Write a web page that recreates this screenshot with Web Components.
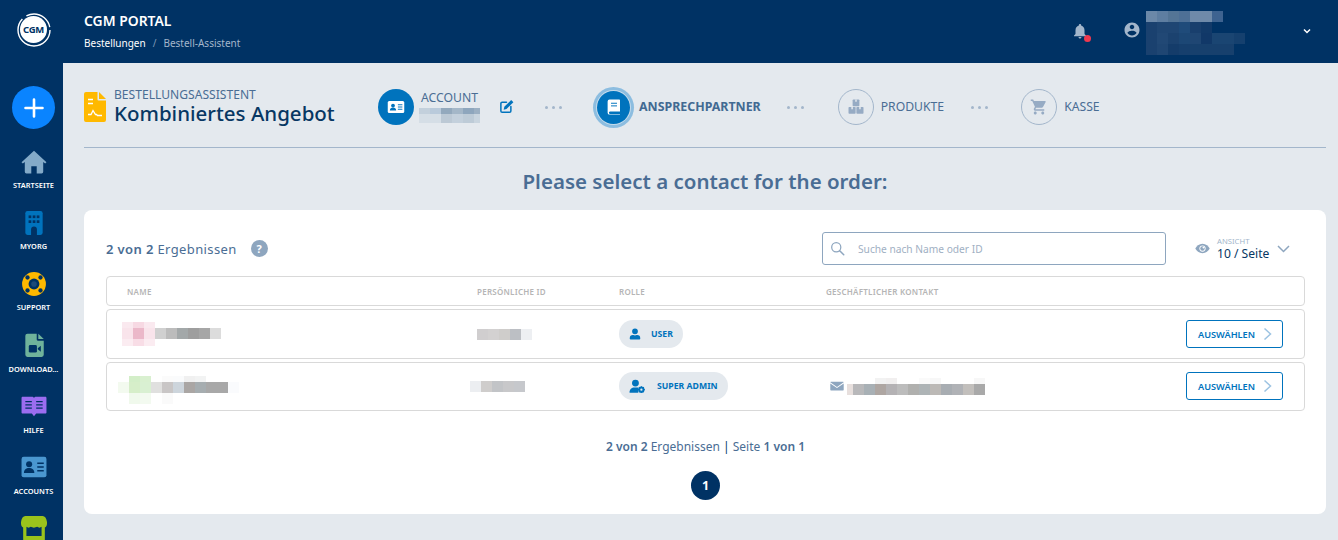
<!doctype html>
<html lang="de">
<head>
<meta charset="utf-8">
<title>CGM Portal</title>
<style>
  html, body { margin: 0; height: 100%; overflow: hidden; }
  body { display: flex; background: #e4e9ee; font-family: "Noto Sans", "Open Sans", sans-serif; color: #4a6d94; }
  cgm-main { flex: 1; min-width: 0; }
</style>
</head>
<body>
<cgm-sidebar>
  <nav-item icon="home" label="STARTSEITE"></nav-item>
  <nav-item icon="building" label="MYORG"></nav-item>
  <nav-item icon="ring" label="SUPPORT"></nav-item>
  <nav-item icon="filevideo" label="DOWNLOAD..."></nav-item>
  <nav-item icon="book" label="HILFE"></nav-item>
  <nav-item icon="card" label="ACCOUNTS"></nav-item>
  <nav-item icon="store"></nav-item>
</cgm-sidebar>
<cgm-main>
  <cgm-topbar></cgm-topbar>
  <order-header>
    <order-step slot="steps" icon="cardwhite" state="done" label="ACCOUNT"></order-step>
    <order-step slot="steps" icon="bookwhite" state="active" label="ANSPRECHPARTNER"></order-step>
    <order-step slot="steps" icon="boxes" label="PRODUKTE"></order-step>
    <order-step slot="steps" icon="cart" label="KASSE"></order-step>
  </order-header>
  <contact-panel></contact-panel>
</cgm-main>

<script>
const ICONS = {
  home: '<path fill="#83aac8" d="M12 1.500 .5 12.200l1.200 1.200 1.800-1.500V21A1.500 1.500 0 0 0 5 22.500h4.500V16h5v6.500H19a1.500 1.500 0 0 0 1.500-1.500v-9.100l1.800 1.500 1.200-1.200z"/>',
  building: '<rect x="4" y="1" width="16" height="22" rx="2" fill="#0073bd"/><g fill="#003264"><rect x="7" y="5" width="2.500" height="2.500"/><rect x="10.800" y="5" width="2.500" height="2.500"/><rect x="14.500" y="5" width="2.500" height="2.500"/><rect x="7" y="9.500" width="2.500" height="2.500"/><rect x="10.800" y="9.500" width="2.500" height="2.500"/><rect x="14.500" y="9.500" width="2.500" height="2.500"/><path d="M9.300 23v-5a2.700 2.700 0 0 1 5.400 0v5z"/></g>',
  ring: '<circle cx="12" cy="12" r="11" fill="#ffb900"/><circle cx="12" cy="12" r="5" fill="#003264"/><circle cx="12" cy="12" r="2.600" fill="#1d4a78"/><g fill="#003264"><circle cx="6" cy="6" r="2"/><circle cx="18" cy="6" r="2"/><circle cx="6" cy="18" r="2"/><circle cx="18" cy="18" r="2"/></g>',
  filevideo: '<path fill="#6fb39b" d="M6 1.500h8.500v5.500a1 1 0 0 0 1 1h5.500v13a2 2 0 0 1-2 2H6a2 2 0 0 1-2-2V3.500a2 2 0 0 1 2-2z"/><path fill="#6fb39b" d="M16 1.500l5 5h-5z"/><rect x="7.200" y="12" width="7.500" height="7" rx="1.300" fill="#003264"/><path fill="#003264" d="m15.500 15 2.800-2.200v5.400L15.500 16z"/>',
  book: '<path fill="#9b6df0" d="M1.500 3.500h8.500c1 0 1.700.4 2 1 .3-.6 1-1 2-1h8.500c.5 0 1 .4 1 1v13.500c0 .5-.5 1-1 1H14l-2 2.500-2-2.500H1.500c-.5 0-1-.5-1-1V4.500c0-.6.5-1 1-1z"/><g stroke="#003264" stroke-width="1.200"><path d="M4 8h6M4 11h6M4 14h6M14 8h6M14 11h6M14 14h6"/></g>',
  card: '<rect x=".5" y="2.500" width="23" height="19" rx="2" fill="#4a97d0"/><circle cx="7.500" cy="9.500" r="2.800" fill="#003264"/><path fill="#003264" d="M2.700 17.500c0-3 2-4.500 4.800-4.500s4.800 1.500 4.800 4.500z"/><g stroke="#003264" stroke-width="1.300"><path d="M15 8.500h6M15 12h6M15 15.500h6"/></g>',
  store: '<path fill="#9ac31c" d="M4 0h16c2 0 3.500 2 4 5.500V7c0 1.800-1 3.500-2 3.500V22a2 2 0 0 1-2 2H4a2 2 0 0 1-2-2V10.500C1 10.500 0 8.800 0 7V5.500C.5 2 2 0 4 0z"/><path fill="#003264" d="M5 10c1.200 1 2.800 1 4 0 1.800 1 3.800 1 6 0 1.200 1 2.800 1 4 0v8.500H5z"/>',
  cardwhite: '<rect x="1" y="4" width="22" height="16" rx="2" fill="#fff"/><circle cx="8" cy="10" r="2.500" fill="#0073bd"/><path fill="#0073bd" d="M3.800 16.500c0-2.600 1.800-3.900 4.200-3.900s4.200 1.300 4.200 3.900z"/><g stroke="#0073bd" stroke-width="1.300"><path d="M14.500 9h6M14.500 12h6M14.500 15h6"/></g>',
  bookwhite: '<path fill="#fff" d="M6 2h13a1 1 0 0 1 1 1v15H6.500a1.700 1.700 0 0 0 0 3.300H20v.7H6a2.500 2.500 0 0 1-2.500-2.500v-15A2.500 2.500 0 0 1 6 2z"/><g stroke="#0073bd" stroke-width="1.300"><path d="M8 7h8M8 10.500h8"/></g>',
  boxes: '<g fill="#96abc4"><rect x="7.500" y="2" width="9" height="9" rx="1"/><rect x="2" y="12" width="9.500" height="9" rx="1"/><rect x="12.500" y="12" width="9.500" height="9" rx="1"/></g><g fill="#e4e9ee"><rect x="11" y="2" width="2" height="3"/><rect x="5.800" y="12" width="2" height="3"/><rect x="16.300" y="12" width="2" height="3"/></g>',
  cart: '<path fill="#96abc4" d="M7 18c-1.100 0-1.990.9-1.990 2S5.900 22 7 22s2-.9 2-2-.9-2-2-2zM1 2v2h2l3.600 7.590-1.350 2.450c-.16.280-.25.610-.25.960 0 1.100.9 2 2 2h12v-2H7.420c-.14 0-.25-.11-.25-.25l.03-.12.9-1.630h7.450c.75 0 1.410-.41 1.750-1.030l3.580-6.490c.08-.14.12-.31.12-.48 0-.55-.45-1-1-1H5.210l-.94-2H1zm16 16c-1.100 0-1.990.9-1.990 2s.89 2 1.990 2 2-.9 2-2-.9-2-2-2z"/>',
  edit: '<path fill="none" stroke="#0073bd" stroke-width="2.400" stroke-linecap="round" stroke-linejoin="round" d="M12 5H5a2 2 0 0 0-2 2v12a2 2 0 0 0 2 2h12a2 2 0 0 0 2-2v-7"/><path fill="#0073bd" d="M19.500 1.500 23 5 12 16l-4.500 1 1-4.500z"/>',
  doc: '<path fill="#ffb900" d="M2 0h11.500v7.500a1 1 0 0 0 1 1H22V28a2 2 0 0 1-2 2H2a2 2 0 0 1-2-2V2a2 2 0 0 1 2-2z"/><path fill="#ffb900" d="M15 0l7 7h-7z"/><g stroke="#fff" stroke-width="1.300" fill="none"><path d="M4 7.500h5M4 11.500h5M4 22.500h3l2-4 2.500 4h1l1 1H18"/></g>',
  bell: '<path fill="#a3b6cb" d="M12 22c1.100 0 2-.9 2-2h-4c0 1.100.89 2 2 2zm6-6v-5c0-3.070-1.640-5.640-4.500-6.320V4c0-.83-.67-1.500-1.500-1.500s-1.500.67-1.500 1.500v.68C7.630 5.360 6 7.920 6 11v5l-2 2v1h16v-1l-2-2z"/>',
  account: '<path fill="#a3b6cb" d="M12 2C6.480 2 2 6.480 2 12s4.480 10 10 10 10-4.480 10-10S17.520 2 12 2zm0 3c1.660 0 3 1.340 3 3s-1.340 3-3 3-3-1.340-3-3 1.340-3 3-3zm0 14.200c-2.500 0-4.710-1.280-6-3.220.03-1.990 4-3.080 6-3.080 1.990 0 5.970 1.090 6 3.080-1.290 1.940-3.500 3.220-6 3.220z"/>',
  search: '<circle cx="10" cy="10" r="7.300" fill="none" stroke="#8ea6bf" stroke-width="2"/><path stroke="#8ea6bf" stroke-width="2.400" stroke-linecap="round" d="m15.500 15.500 6.500 6.500"/>',
  eye: '<path fill="#8ea6bf" d="M12 4.500C6.500 4.500 2.500 8 .5 12c2 4 6 7.500 11.500 7.500S21.500 16 23.500 12C21.500 8 17.500 4.500 12 4.500z"/><circle cx="12" cy="12" r="5" fill="#fff"/><circle cx="12" cy="12" r="3.600" fill="#8ea6bf"/><circle cx="13.500" cy="10.500" r="1.500" fill="#fff"/>',
  user: '<path fill="#0073bd" d="M12 12.500a5.800 5.800 0 1 0 0-11.600 5.800 5.800 0 0 0 0 11.600zm4.200 1.500h-.8a8.300 8.300 0 0 1-6.800 0h-.8A6.300 6.300 0 0 0 1.500 20.300v1.100c0 1 .8 1.700 1.700 1.700h17.600c1 0 1.700-.8 1.700-1.700v-1.100a6.300 6.300 0 0 0-6.300-6.300z"/>',
  useradmin: '<circle cx="9.500" cy="6.500" r="5.500" fill="#0073bd"/><path fill="#0073bd" d="M0 21.500c0-5 3.500-8 8-8h3.500c1 0 2 .2 3 .7l-.5 7.800H1.500a1.500 1.500 0 0 1-1.500-.5z"/><circle cx="19" cy="17" r="3.700" fill="none" stroke="#0073bd" stroke-width="2.600"/><g stroke="#0073bd" stroke-width="1.700"><path d="M19 11.500v11M13.500 17h11M15 13l8 8M23 13l-8 8"/></g><circle cx="19" cy="17" r="1.800" fill="#e4e9ee"/>',
  mail: '<path fill="#8ea6bf" d="M1.500 4.500h21c.5 0 1 .4 1 1L12 13.500.5 5.500c0-.6.5-1 1-1zM.5 7.500 12 15.500l11.500-8v11c0 .6-.5 1-1 1h-21c-.5 0-1-.4-1-1z"/>'
}

class AppIcon extends HTMLElement {
  connectedCallback() {
    const w = this.getAttribute('w') || 24
    const h = this.getAttribute('h') || w
    const vb = this.getAttribute('vb') || '0 0 24 24'
    this.attachShadow({ mode: 'open' }).innerHTML = `
      <style>:host { display: block; width: ${w}px; height: ${h}px; flex: none; } svg { display: block; }</style>
      <svg xmlns="http://www.w3.org/2000/svg" width="${w}" height="${h}" viewBox="${vb}">${ICONS[this.getAttribute('name')]}</svg>`
  }
}
customElements.define('app-icon', AppIcon)

// pixelated area: rows split by "|", cells by space, "-" is an empty cell
class BlurBlock extends HTMLElement {
  connectedCallback() {
    const rows = this.getAttribute('cells').split('|').map(r => r.trim().split(/\s+/))
    const n = Math.max(...rows.map(r => r.length))
    const cols = this.getAttribute('cols') || `repeat(${n}, 11px)`
    const heights = this.getAttribute('heights') || rows.map(() => '11px').join(' ')
    const cells = rows.map(r => r.concat(Array(n - r.length).fill('-'))
      .map(c => `<i style="background:${c === '-' ? 'transparent' : '#' + c}"></i>`).join('')).join('')
    this.attachShadow({ mode: 'open' }).innerHTML = `
      <style>
        :host { display: block; flex: none; }
        div { display: grid; grid-template-columns: ${cols}; grid-template-rows: ${heights}; }
      </style>
      <div>${cells}</div>`
  }
}
customElements.define('blur-block', BlurBlock)

class NavItem extends HTMLElement {
  connectedCallback() {
    const label = this.getAttribute('label')
    this.attachShadow({ mode: 'open' }).innerHTML = `
      <style>
        :host { display: flex; flex-direction: column; align-items: center; height: 61.200px; flex: none; }
        .ic { height: 31px; display: flex; align-items: center; justify-content: center; }
        span { font-size: 7.400px; font-weight: 600; color: #fff; line-height: 10px; margin-top: 3px; white-space: nowrap; }
      </style>
      <div class="ic"><app-icon name="${this.getAttribute('icon')}" w="26"></app-icon></div>
      ${label ? `<span>${label}</span>` : ''}`
  }
}
customElements.define('nav-item', NavItem)

class CgmSidebar extends HTMLElement {
  constructor() {
    super()
    this.attachShadow({ mode: 'open' }).innerHTML = `
      <style>
        :host { display: flex; flex-direction: column; align-items: center; width: 63px; height: 100vh; flex: none; box-sizing: border-box; padding-left: 4px; background: #003264; overflow: hidden; }
        .logo { margin-top: 13px; width: 34px; height: 34px; flex: none; }
        .add { margin-top: 39px; width: 43px; height: 43px; flex: none; border-radius: 50%; background: #0a84ff; display: flex; align-items: center; justify-content: center; }
        .list { margin-top: 17px; display: flex; flex-direction: column; width: 100%; }
      </style>
      <svg class="logo" viewBox="0 0 34 34">
        <circle cx="17" cy="17" r="16" fill="none" stroke="#fff" stroke-width="1.400" stroke-dasharray="62 5 30 4"/>
        <circle cx="16.500" cy="16.500" r="13.500" fill="#fff"/>
        <text x="16.500" y="20" text-anchor="middle" font-family="Noto Sans, sans-serif" font-size="9.500" font-weight="700" fill="#003264" letter-spacing="-.2">CGM</text>
      </svg>
      <div class="add">
        <svg width="20" height="20" viewBox="0 0 20 20"><path d="M10 1.500v17M1.500 10h17" stroke="#fff" stroke-width="2.600" stroke-linecap="round"/></svg>
      </div>
      <div class="list"><slot></slot></div>`
  }
}
customElements.define('cgm-sidebar', CgmSidebar)

class CgmMain extends HTMLElement {
  constructor() {
    super()
    this.attachShadow({ mode: 'open' }).innerHTML = `
      <style>:host { display: block; height: 100vh; overflow: hidden; }</style>
      <slot></slot>`
  }
}
customElements.define('cgm-main', CgmMain)

class CgmTopbar extends HTMLElement {
  constructor() {
    super()
    this.attachShadow({ mode: 'open' }).innerHTML = `
      <style>
        :host { display: flex; height: 63px; background: #003264; padding: 0 27px 0 21px; align-items: flex-start; box-sizing: border-box; }
        .brand { flex: 1; padding-top: 12px; }
        h1 { margin: 0; font-size: 13.900px; line-height: 18px; font-weight: 600; color: #fff; }
        .crumbs { margin-top: 6px; font-size: 10px; line-height: 14px; color: #fff; display: flex; }
        .crumbs i { font-style: normal; color: #7f98b4; margin: 0 7px 0 7px; }
        .crumbs span { color: #a3b6cb; }
        .bell { position: relative; margin-top: 22px; }
        .dot { position: absolute; right: -2px; bottom: -2px; width: 7px; height: 7px; border-radius: 50%; background: #f0394f; }
        .acct { margin: 21px 0 0 34px; }
        .name { margin: 11px 0 0 5px; }
        .chev { margin: 28px 0 0 47px; }
      </style>
      <div class="brand">
        <h1>CGM PORTAL</h1>
        <div class="crumbs">Bestellungen<i>/</i><span>Bestell-Assistent</span></div>
      </div>
      <div class="bell"><app-icon name="bell" w="18"></app-icon><div class="dot"></div></div>
      <app-icon class="acct" name="account" w="18"></app-icon>
      <blur-block class="name" cols="repeat(10, 11px)" heights="11px 11px 11px 11px"
        cells="6b88a8 5e7ea1 547596 4e7096 6f8aa9 6f8aa9 3e6390 - - - |
               1a416f 1f4673 1f4673 1f4b7a 193f6d 123a69 - - - - |
               1a416f 214875 1b426f 1c4775 1f4673 113868 1a4572 1a4572 15406e - |
               1a416f 1f4673 143c6a 163f6d 17406d 17406d 17406d 17406d - -"></blur-block>
      <svg class="chev" width="8" height="6" viewBox="0 0 8 6"><path d="m1 1.500 3 3 3-3" fill="none" stroke="#fff" stroke-width="1.500"/></svg>`
  }
}
customElements.define('cgm-topbar', CgmTopbar)

class OrderStep extends HTMLElement {
  connectedCallback() {
    const state = this.getAttribute('state') || 'todo'
    const on = state !== 'todo'
    const label = this.getAttribute('label')
    const sub = label === 'ACCOUNT'
    this.attachShadow({ mode: 'open' }).innerHTML = `
      <style>
        :host { display: flex; align-items: center; flex: none; }
        .circle { width: 36px; height: 36px; box-sizing: border-box; border-radius: 50%; display: flex; align-items: center; justify-content: center; flex: none;
          ${on ? 'background:#0073bd;' : 'border:1px solid #a3b6cb;'}
          ${state === 'active' ? 'box-shadow: 0 0 0 1px #c5dbeb, 0 0 0 4px #8cbde0; width:33px; height:33px; margin-left:4px;' : ''} }
        .txt { margin-left: 7px; ${state === 'active' ? 'margin-left:9px;' : ''} }
        .lbl { display: block; font-size: 12.200px; line-height: 16px; color: #4a6d94; white-space: nowrap; ${state === 'active' ? 'font-weight: 700; color:#426a92; font-size:12.400px;' : ''} ${sub ? 'margin-top:-1px;' : ''} }
        .sub { margin: 2px 0 0 -2px; }
      </style>
      <div class="circle"><app-icon name="${this.getAttribute('icon')}" w="18"></app-icon></div>
      <div class="txt">
        <span class="lbl">${label}</span>
        ${sub ? `<blur-block class="sub" cols="repeat(5, 11px) 6px" heights="6px 9px"
          cells="c3d0dc b9cadb 93a9bd a4b7c8 8ea6bd 9cb0c3 | d5dee6 d5dee6 bcc9d5 c3d0dc bdcbd7 c9d5df"></blur-block>` : ''}
      </div>`
  }
}
customElements.define('order-step', OrderStep)

class OrderHeader extends HTMLElement {
  constructor() {
    super()
    this.attachShadow({ mode: 'open' }).innerHTML = `
      <style>
        :host { display: block; margin: 0 12px 0 21px; height: 85px; box-sizing: border-box; padding-top: 22px; border-bottom: 1px solid #a3b6cb; }
        .row { display: flex; align-items: center; height: 44px; }
        .title { display: flex; align-items: center; width: 294px; flex: none; }
        .t { margin-left: 8px; }
        small { display: block; font-size: 12.100px; line-height: 13px; color: #4a6d94; }
        h2 { margin: 0; font-size: 20.500px; line-height: 25px; font-weight: 500; color: #073763; white-space: nowrap; }
        .steps { display: flex; align-items: center; }
      </style>
      <div class="row">
        <div class="title">
          <app-icon name="doc" w="22" h="30" vb="0 0 22 30"></app-icon>
          <div class="t"><small>BESTELLUNGSASSISTENT</small><h2>Kombiniertes Angebot</h2></div>
        </div>
        <div class="steps"><slot name="steps"></slot></div>
      </div>`
  }
  connectedCallback() {
    // spacing between steps, with the edit pen after the first one
    const steps = [...this.children]
    const dots = (w, after) => {
      const d = document.createElement('step-dots')
      d.slot = 'steps'
      d.style.width = w + 'px'
      d.style.marginRight = after + 'px'
      return d
    }
    const pen = document.createElement('app-icon')
    pen.setAttribute('name', 'edit')
    pen.setAttribute('w', '15')
    pen.slot = 'steps'
    pen.style.margin = '-2px 0 0 19px'
    steps[0].after(pen, dots(79, 0))
    steps[1].after(dots(70, 7))
    steps[2].after(dots(70, 7))
  }
}
customElements.define('order-header', OrderHeader)

class StepDots extends HTMLElement {
  constructor() {
    super()
    this.attachShadow({ mode: 'open' }).innerHTML = `
      <style>
        :host { display: flex; justify-content: center; gap: 4px; flex: none; }
        i { width: 3px; height: 3px; border-radius: 50%; background: #a3b6cb; }
      </style>
      <i></i><i></i><i></i>`
  }
}
customElements.define('step-dots', StepDots)

class RolePill extends HTMLElement {
  connectedCallback() {
    const admin = this.hasAttribute('admin')
    this.attachShadow({ mode: 'open' }).innerHTML = `
      <style>
        :host { display: inline-flex; align-items: center; height: 28px; border-radius: 14px; background: #e4e9ee; padding: 0 10px 0 ${admin ? 9 : 10}px; gap: ${admin ? 11 : 10}px; }
        span { font-size: 8.700px; font-weight: 700; color: #0073bd; white-space: nowrap; }
      </style>
      <app-icon name="${admin ? 'useradmin' : 'user'}" w="${admin ? 18 : 12}" h="${admin ? 15 : 14}"></app-icon>
      <span><slot></slot></span>`
  }
}
customElements.define('role-pill', RolePill)

class SelectButton extends HTMLElement {
  constructor() {
    super()
    this.attachShadow({ mode: 'open' }).innerHTML = `
      <style>
        :host { display: flex; align-items: center; width: 97px; height: 28px; box-sizing: border-box; border: 1px solid #0073bd; border-radius: 3px; padding-left: 11px; background: #fff; flex: none; }
        span { font-size: 9.200px; font-weight: 600; color: #0073bd; white-space: nowrap; width: 65px; }
      </style>
      <span>AUSWÄHLEN</span>
      <svg width="9" height="14" viewBox="0 0 9 14"><path d="m1.500 1.500 6 5.500-6 5.500" fill="none" stroke="#9cc3e2" stroke-width="1.500"/></svg>`
  }
}
customElements.define('select-button', SelectButton)

class ContactRow extends HTMLElement {
  constructor() {
    super()
    this.attachShadow({ mode: 'open' }).innerHTML = `
      <style>
        :host { display: grid; grid-template-columns: 370px 142px 207px 1fr auto; align-items: center; box-sizing: border-box; border: 1px solid #d9d9d9; border-radius: 4px; padding-right: 21px; margin-top: 3px; background: #fff; }
      </style>
      <slot></slot>`
  }
}
customElements.define('contact-row', ContactRow)

class ContactPanel extends HTMLElement {
  constructor() {
    super()
    this.attachShadow({ mode: 'open' }).innerHTML = `
      <style>
        :host { display: block; }
        h3 { margin: 0 12px 0 21px; text-align: center; font-size: 20.500px; line-height: 28px; font-weight: 600; color: #4a6d94; padding-top: 19px; }
        .card { margin: 15px 12px 0 21px; height: 304px; box-sizing: border-box; background: #fff; border-radius: 8px; padding: 22px 21px 0 22px; }
        .bar { display: flex; align-items: center; height: 33px; }
        .count { font-size: 13px; color: #4a6d94; white-space: nowrap; letter-spacing: .38px; }
        .count b { font-weight: 600; }
        .help { margin-left: 14px; width: 17px; height: 17px; border-radius: 50%; background: #8ea6bf; color: #fff; font-size: 11px; font-weight: 700; line-height: 17px; text-align: center; }
        .search { margin-left: auto; width: 344px; height: 33px; box-sizing: border-box; border: 1px solid #8ea6bf; border-radius: 3px; display: flex; align-items: center; padding-left: 7px; }
        .search span { margin-left: 13px; font-size: 10.200px; color: #9fb0c3; }
        .view { display: flex; align-items: center; margin-left: 29px; width: 110px; flex: none; }
        .view div { margin-left: 7px; }
        .view small { display: block; font-size: 7.700px; line-height: 9px; color: #a3b6cb; }
        .view strong { display: block; font-size: 12.100px; line-height: 15px; font-weight: 400; color: #073763; white-space: nowrap; }
        .table { margin-top: 11px; }
        .head { height: 30px; margin-top: 0; padding-top: 1px; }
        .head span { font-size: 8px; font-weight: 600; color: #b5b5b5; letter-spacing: .25px; white-space: nowrap; }
        .head span:first-child { padding-left: 20px; }
        .r1 { height: 50px; }
        .r2 { height: 49px; padding-bottom: 1px; }
        .contact { display: flex; align-items: center; gap: 3px; padding-left: 4px; }
        .sum { margin-top: 28px; text-align: center; font-size: 12px; line-height: 16px; color: #4a6d94; }
        .sum b { font-weight: 600; }
        .sum i { font-style: normal; color: #073763; }
        .page { margin: 16px auto 0; width: 29px; height: 29px; border-radius: 50%; background: #003264; color: #fff; font-size: 12.500px; font-weight: 700; line-height: 29px; text-align: center; }
      </style>
      <h3>Please select a contact for the order:</h3>
      <div class="card">
        <div class="bar">
          <div class="count"><b>2 von 2</b> Ergebnissen</div>
          <div class="help">?</div>
          <div class="search"><app-icon name="search" w="15"></app-icon><span>Suche nach Name oder ID</span></div>
          <div class="view">
            <app-icon name="eye" w="15"></app-icon>
            <div><small>ANSICHT</small><strong>10 / Seite</strong></div>
            <svg style="margin-left:8px" width="13" height="8" viewBox="0 0 13 8"><path d="m1 1 5.500 5.500L12 1" fill="none" stroke="#8ea6bf" stroke-width="1.500"/></svg>
          </div>
        </div>
        <div class="table">
          <contact-row class="head">
            <span>NAME</span><span>PERSÖNLICHE ID</span><span>ROLLE</span><span>GESCHÄFTLICHER KONTAKT</span><span></span>
          </contact-row>
          <contact-row class="r1">
            <blur-block style="margin-left:15px" heights="6px 11px 7px"
              cells="fae9ef f7d9e3 fae9ef | f9e4eb ebb8c9 f9e4eb d0d0d0 bcbcbc a3a8a9 9e9e9e a6a6a6 dcdcdc | fbecf1 f8dde6 fbecf1"></blur-block>
            <blur-block cells="d0cecf d3d1d1 cfcdcb bcbfc4 edeff2"></blur-block>
            <div><role-pill>USER</role-pill></div>
            <div></div>
            <select-button></select-button>
          </contact-row>
          <contact-row class="r2">
            <blur-block style="margin:7px 0 0 11px" heights="6px 11px 11px"
              cells="- d3eec8 d9f0d0 - fbfbfb fafbfc f0f0f0 f2f3f3 - - - | f3faef d6eec9 d9f0d2 e0e0df c9c6c6 cdd5dc aaa6a4 a6adb0 a8a8a8 a8a8a8 fafbfd | - f0f9ec f3faf0 - fafafa - - - - - -"></blur-block>
            <blur-block style="margin-left:-7px" cells="eceef1 cfcdcc c2c4c7 c8c8ca c6c8cc"></blur-block>
            <div><role-pill admin>SUPER ADMIN</role-pill></div>
            <div class="contact">
              <app-icon name="mail" w="14"></app-icon>
              <blur-block cols="6px repeat(12, 11px)" heights="6px 11px"
                cells="- - - f2f2f2 f1efef - - fafafa f7f7f7 - - - f7f7f7 | e7dfdd b8b8ba a8b0b5 aea6a2 b4b2b4 bcbcbc b0b0ae aeb4b6 bcb9b6 a8adb2 b0b2b6 c2bfbc a9a9a9"></blur-block>
            </div>
            <select-button></select-button>
          </contact-row>
        </div>
        <div class="sum"><b>2 von 2</b> Ergebnissen <i>|</i> Seite <b>1 von 1</b></div>
        <div class="page">1</div>
      </div>`
  }
}
customElements.define('contact-panel', ContactPanel)
</script>
</body>
</html>
